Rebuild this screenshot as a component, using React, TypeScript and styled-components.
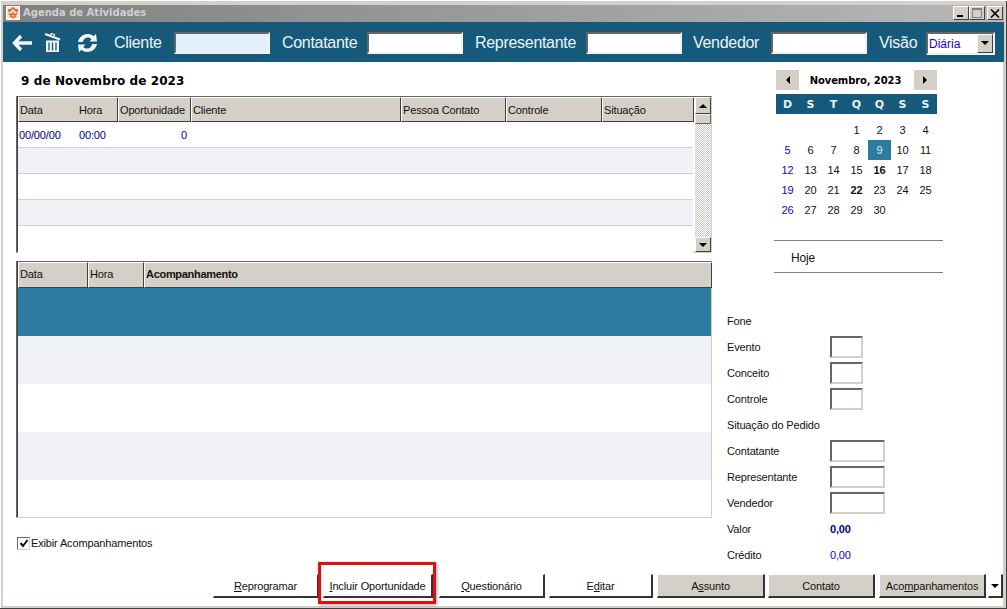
import React from "react";
import styled, { createGlobalStyle } from "styled-components";

const Global = createGlobalStyle`
  html, body { margin: 0; padding: 0; background: #d4d0c8; overflow: hidden; }
  * { box-sizing: border-box; }
`;
const FONT = `"Liberation Sans", Arial, sans-serif`;
const sunken = `border-style: solid; border-width: 2px; border-color: #666 #d4d0c8 #d4d0c8 #666;`;

const Win = styled.div`
  width: 1007px; height: 609px; background: #d4d0c8; border-top: 1px solid #fff;
  padding: 4px 3px 3px 3px; display: flex; flex-direction: column;
  font: 11px ${FONT}; letter-spacing: -0.15px; color: #111; box-shadow: inset -1px -1px 0 #404040, inset 1px 0 0 #fff;
`;
const Title = styled.div`
  height: 17px; flex: none; display: flex; align-items: center; padding: 0 1px 1px 3px;
  background: linear-gradient(90deg, #808080, #b8b8b8); color: #d0d0d0; letter-spacing: 0;
  font: bold 10px "DejaVu Sans", sans-serif;
`;
const TitleIcon = styled.svg` width: 14px; height: 14px; margin-right: 3px; flex: none; `;
const TitleText = styled.span` flex: 1; margin-bottom: 2px; `;
const WinBtn = styled.div`
  width: 16px; height: 14px; margin-left: ${(p: { $gap?: number }) => p.$gap ?? 0}px;
  background: #d4d0c8; display: flex; align-items: center; justify-content: center;
  border: 1px solid; border-color: #fff #404040 #404040 #fff;
`;
const Toolbar = styled.div`
  height: 40px; flex: none; background: #155a7a; display: flex; align-items: center;
  padding: 2px 0 0 9px; color: #eef4f7;
`;
const ToolIcon = styled.svg<{ $mr: number }>` flex: none; margin-right: ${p => p.$mr}px; `;
const ToolLabel = styled.span<{ $w: number }>`
  font: 16px ${FONT}; letter-spacing: -0.3px; width: ${p => p.$w}px; flex: none; white-space: nowrap;
`;
const ToolInput = styled.div<{ $fill?: string; $mr: number }>`
  width: 96px; height: 22px; flex: none; background: ${p => p.$fill ?? "#fff"}; margin-right: ${p => p.$mr}px;
  ${sunken} border-color: #666 #f0f0f0 #f0f0f0 #666;
`;
const VisaoSelect = styled.div`
  width: 69px; height: 23px; flex: none; background: #fff; display: flex; align-items: center;
  justify-content: space-between; padding-left: 1px; color: #1a00c8; font: 12px ${FONT}; letter-spacing: 0;
  ${sunken} border-color: #666 #f0f0f0 #f0f0f0 #666;
`;
const SelectText = styled.span` padding-top: 2px; `;
const SelectBtn = styled.div`
  width: 16px; height: 19px; background: #d4d0c8; display: flex; align-items: center; justify-content: center;
  border: 1px solid; border-color: #fff #404040 #404040 #fff;
`;
const Body = styled.div`
  flex: 1; background: #fff; display: flex; flex-direction: column; min-height: 0;
  border-right: 1px solid #d4d0c8;
`;
const Main = styled.div` flex: 1; display: flex; min-height: 0; `;
const Left = styled.div` width: 709px; flex: none; padding-left: 13px; `;
const DateTitle = styled.div`
  height: 34px; padding: 9px 0 0 5px; font: bold 12px "DejaVu Sans", sans-serif; letter-spacing: 0.1px; color: #000;
  line-height: 20px;
`;
const GridBox = styled.div`
  display: flex; border: 1px solid; border-color: #666 #d4d0c8 #d4d0c8 #666;
  box-shadow: inset 1px 0 0 #404040; height: ${(p: { $h: number }) => p.$h}px; width: 696px;
`;
const GridInner = styled.div` flex: 1; min-width: 0; display: flex; flex-direction: column; padding-left: 1px; `;
const HeaderRow = styled.div<{ $h: number }>` display: flex; height: ${p => p.$h}px; flex: none; `;
const HeaderCell = styled.div<{ $w: number; $bold?: boolean; $pb: number }>`
  width: ${p => p.$w}px; flex: none; background: #d4d0c8; display: flex; align-items: center; padding: 0 0 ${p => p.$pb}px 1px;
  border: 1px solid; border-color: #fff #404040 #404040 #fff; white-space: nowrap; color: #111;
  ${p => p.$bold && "font-weight: 700; letter-spacing: -0.3px;"}
`;
const HeaderSlot = styled.span` width: 59px; flex: none; `;
const Row = styled.div<{ $h: number; $bg: string; $line?: boolean }>`
  height: ${p => p.$h}px; flex: none; background: ${p => p.$bg}; display: flex; align-items: center;
  ${p => p.$line && "border-bottom: 1px solid #d4d0c8;"}
  color: #00008b;
`;
const RowCell = styled.span<{ $w: number; $right?: boolean }>`
  width: ${p => p.$w}px; flex: none; padding: 0 4px 0 1px; ${p => p.$right && "text-align: right;"}
`;
const Scroll = styled.div`
  width: 16px; flex: none; display: flex; flex-direction: column; margin-left: 2px;
  background: repeating-conic-gradient(#c8c8c8 0 25%, #fff 0 50%) 0 0 / 2px 2px;
`;
const ScrollBtn = styled.div<{ $h: number }>`
  height: ${p => p.$h}px; flex: none; background: #d4d0c8; display: flex; align-items: center; justify-content: center;
  border: 1px solid; border-color: #fff #404040 #404040 #fff;
`;
const ScrollThumb = styled(ScrollBtn)` border-color: #eee #666 #666 #eee; `;
const ScrollFill = styled.div` flex: 1; `;
const GridGap = styled.div` height: 8px; `;
const Check = styled.label` display: flex; align-items: center; margin-top: 18px; height: 14px; color: #111; `;
const CheckBox = styled.span`
  width: 13px; height: 13px; margin: 0 1px 0 1px; background: #fff; display: flex; align-items: center; justify-content: center;
  border: 1px solid; border-color: #666 #d4d0c8 #d4d0c8 #666; flex: none;
`;
const Right = styled.div` flex: 1; display: flex; flex-direction: column; padding-left: 15px; position: relative; `;
const Calendar = styled.div` margin: 8px 0 0 49px; width: 161px; `;
const CalNav = styled.div` display: flex; height: 20px; align-items: center; justify-content: space-between; `;
const CalNavBtn = styled.div`
  width: 23px; height: 20px; background: #d4d0c8; display: flex; align-items: center; justify-content: center;
`;
const CalMonth = styled.div` font: bold 10px "DejaVu Sans", sans-serif; letter-spacing: -0.1px; color: #000; margin-right: 2px; `;
const WeekHead = styled.div`
  display: grid; grid-template-columns: repeat(7, 23px); height: 20px; margin-top: 4px; background: #155a7a;
  color: #eaf2f6; font: bold 11px "DejaVu Sans", sans-serif; letter-spacing: 0; align-items: center; text-align: center;
`;
const Days = styled.div` display: grid; grid-template-columns: repeat(7, 23px); grid-auto-rows: 20px; margin-top: 6px; `;
const Day = styled.div<{ $sun?: boolean; $sel?: boolean; $bold?: boolean }>`
  display: flex; align-items: center; justify-content: center; font-size: 11px;
  color: ${p => p.$sel ? "#d8e8f0" : p.$sun ? "#1a00c8" : "#111"};
  background: ${p => p.$sel ? "#2e7ba2" : "transparent"};
  font-weight: ${p => p.$bold ? 700 : 400};
`;
const Today = styled.div`
  margin: 20px 0 0 47px; width: 169px; height: 33px; border-top: 1px solid #808080; border-bottom: 1px solid #808080;
  display: flex; align-items: center; padding: 2px 0 0 17px; font-size: 12px; color: #111;
`;
const Details = styled.div` margin-top: 35px; `;
const DetailRow = styled.div` height: 26px; display: flex; align-items: center; color: #111; `;
const DetailLabel = styled.span` width: 103px; flex: none; `;
const DetailInput = styled.div<{ $w: number }>`
  width: ${p => p.$w}px; height: 22px; background: #fff; ${sunken}
`;
const Value = styled.span<{ $bold?: boolean }>`
  color: ${p => p.$bold ? "#00008b" : "#1a00c8"}; font-weight: ${p => p.$bold ? 700 : 400};
`;
const Buttons = styled.div` height: 26px; flex: none; margin: 0 0 8px 0; padding-left: 210px; display: flex; align-items: flex-end; `;
const Btn = styled.div<{ $w: number; $flat?: boolean; $mr: number }>`
  width: ${p => p.$w}px; height: 24px; flex: none; margin-right: ${p => p.$mr}px; display: flex; align-items: center; justify-content: center;
  white-space: nowrap; color: #111;
  background: ${p => p.$flat ? "#fff" : "#d4d0c8"};
  border-style: solid; border-width: 1px 2px 2px 1px;
  border-color: #fff #333 #333 #fff;
`;
const ArrowBtn = styled(Btn)` background: #fff; `;
const U = styled.span` text-decoration: underline; `;
const Highlight = styled.div`
  position: absolute; left: 318px; top: 562px; width: 118px; height: 42px; border: 3px solid #e01010; pointer-events: none;
  box-shadow: 1px 1px 3px rgba(0,0,0,.35);
`;
const Page = styled.div` position: relative; `;

const Tri = ({ d, c = "#000" }: { d: "up" | "down" | "left" | "right"; c?: string }) => {
  const pts = { up: "0,5 4,1 8,5", down: "0,1 8,1 4,5", left: "5,0 1,4 5,8", right: "1,0 5,4 1,8" }[d];
  const horiz = d === "left" || d === "right";
  return <svg width={horiz ? 6 : 9} height={horiz ? 9 : 6} viewBox={horiz ? "0 0 6 9" : "0 0 9 6"}><polygon points={pts} fill={c} /></svg>;
};

const weeks: (number | null)[] = [null, null, null, 1, 2, 3, 4, 5, 6, 7, 8, 9, 10, 11, 12, 13, 14, 15, 16, 17, 18, 19, 20, 21, 22, 23, 24, 25, 26, 27, 28, 29, 30];
const cols1: [string, number][] = [["Oportunidade", 73], ["Cliente", 210], ["Pessoa Contato", 105], ["Controle", 96], ["Situação", 92]];
const REFRESH_TOP = "M0 8C1 3 5 0 10 0c2.500 0 4.500 1 5.500 2.200L18 0l1 7.500h-7.500l2.200-2.400C12.500 3.900 11 3.400 10 3.400 7.500 3.400 5.500 5 4.800 8Z";

export default function App() {
  return (
    <Page>
      <Global />
      <Win>
        <Title>
          <TitleIcon viewBox="0 0 14 14">
            <rect width="14" height="14" fill="#fff" />
            <rect x="1" y="1" width="12" height="12" fill="#f8e8dc" />
            <path d="M3 5.500L7 2l4 3.500M3 7l4 5M11 7l-4 5M4 11l3-4 3 4M3 3v3M11 3v3" stroke="#ec6a2c" strokeWidth="1.7" fill="none" />
          </TitleIcon>
          <TitleText>Agenda de Atividades</TitleText>
          <WinBtn $gap={0}><svg width="10" height="10"><rect x="1" y="7" width="6" height="2" fill="#000" /></svg></WinBtn>
          <WinBtn $gap={0}><svg width="10" height="10"><rect x="0.5" y="0.5" width="9" height="9" fill="none" stroke="#808080" /><rect x="0" y="0" width="10" height="2" fill="#808080" /></svg></WinBtn>
          <WinBtn $gap={2}><svg width="10" height="9"><path d="M1 0.500l8 8M9 0.500l-8 8" stroke="#000" strokeWidth="1.6" /></svg></WinBtn>
        </Title>
        <Toolbar>
          <ToolIcon $mr={12} width="20" height="18" viewBox="0 0 20 18"><path d="M9 2L2.500 9 9 16M3 9h17" stroke="#f2f6f8" strokeWidth="3.400" fill="none" /></ToolIcon>
          <ToolIcon $mr={17} width="17" height="20" viewBox="0 0 17 20">
            <path d="M1 1l15 5.500" stroke="#f2f6f8" strokeWidth="2" fill="none" />
            <path d="M6 2l1.500-1.500 3 1.200v1.600" stroke="#f2f6f8" strokeWidth="1.200" fill="none" />
            <path d="M2 7.500h13V19H2z" fill="#f2f6f8" />
            <path d="M5 9.500v8M8.500 9.500v8M12 9.500v8" stroke="#155a7a" strokeWidth="1.300" />
          </ToolIcon>
          <ToolIcon $mr={16} width="20" height="18" viewBox="0 0 20 18">
            <path d={REFRESH_TOP} fill="#f2f6f8" />
            <path d={REFRESH_TOP} fill="#f2f6f8" transform="rotate(180 9.500 9)" />
          </ToolIcon>
          <ToolLabel $w={60}>Cliente</ToolLabel>
          <ToolInput $fill="#e4f0fc" $mr={12} />
          <ToolLabel $w={85}>Contatante</ToolLabel>
          <ToolInput $mr={12} />
          <ToolLabel $w={111}>Representante</ToolLabel>
          <ToolInput $mr={11} />
          <ToolLabel $w={78}>Vendedor</ToolLabel>
          <ToolInput $mr={12} />
          <ToolLabel $w={47}>Visão</ToolLabel>
          <VisaoSelect><SelectText>Diária</SelectText><SelectBtn><Tri d="down" /></SelectBtn></VisaoSelect>
        </Toolbar>
        <Body>
          <Main>
            <Left>
              <DateTitle>9 de Novembro de 2023</DateTitle>
              <GridBox $h={157}>
                <GridInner>
                  <HeaderRow $h={25}>
                    <HeaderCell $pb={0} $w={100}><HeaderSlot>Data</HeaderSlot>Hora</HeaderCell>
                    {cols1.map(([t, w]) => <HeaderCell $pb={0} key={t} $w={w}>{t}</HeaderCell>)}
                  </HeaderRow>
                  <Row $h={26} $bg="#fff" $line><RowCell $w={60}>00/00/00</RowCell><RowCell $w={40}>00:00</RowCell><RowCell $w={73} $right>0</RowCell></Row>
                  <Row $h={26} $bg="#f0f2f8" $line />
                  <Row $h={26} $bg="#fff" $line />
                  <Row $h={26} $bg="#f0f2f8" $line />
                  <Row $h={27} $bg="#fff" />
                </GridInner>
                <Scroll>
                  <ScrollBtn $h={17}><Tri d="up" /></ScrollBtn>
                  <ScrollThumb $h={10} />
                  <ScrollFill />
                  <ScrollBtn $h={15}><Tri d="down" /></ScrollBtn>
                </Scroll>
              </GridBox>
              <GridGap />
              <GridBox $h={257}>
                <GridInner>
                  <HeaderRow $h={26}>
                    <HeaderCell $pb={2} $w={70}>Data</HeaderCell>
                    <HeaderCell $pb={2} $w={56}>Hora</HeaderCell>
                    <HeaderCell $pb={2} $w={568} $bold>Acompanhamento</HeaderCell>
                  </HeaderRow>
                  <Row $h={48} $bg="#2e7ba2" />
                  <Row $h={48} $bg="#f0f2f8" />
                  <Row $h={48} $bg="#fff" />
                  <Row $h={48} $bg="#f0f2f8" />
                  <Row $h={36} $bg="#fff" />
                </GridInner>
              </GridBox>
              <Check>
                <CheckBox><svg width="10" height="10"><path d="M1.500 5l2.500 3 4.500-6" stroke="#111" strokeWidth="2" fill="none" /></svg></CheckBox>
                Exibir Acompanhamentos
              </Check>
            </Left>
            <Right>
              <Calendar>
                <CalNav>
                  <CalNavBtn><Tri d="left" /></CalNavBtn>
                  <CalMonth>Novembro, 2023</CalMonth>
                  <CalNavBtn><Tri d="right" /></CalNavBtn>
                </CalNav>
                <WeekHead>{["D", "S", "T", "Q", "Q", "S", "S"].map((d, i) => <span key={i}>{d}</span>)}</WeekHead>
                <Days>
                  {weeks.map((d, i) => (
                    <Day key={i} $sun={i % 7 === 0} $sel={d === 9} $bold={d === 16 || d === 22}>{d}</Day>
                  ))}
                </Days>
              </Calendar>
              <Today>Hoje</Today>
              <Details>
                <DetailRow><DetailLabel>Fone</DetailLabel></DetailRow>
                <DetailRow><DetailLabel>Evento</DetailLabel><DetailInput $w={33} /></DetailRow>
                <DetailRow><DetailLabel>Conceito</DetailLabel><DetailInput $w={33} /></DetailRow>
                <DetailRow><DetailLabel>Controle</DetailLabel><DetailInput $w={33} /></DetailRow>
                <DetailRow><DetailLabel>Situação do Pedido</DetailLabel></DetailRow>
                <DetailRow><DetailLabel>Contatante</DetailLabel><DetailInput $w={55} /></DetailRow>
                <DetailRow><DetailLabel>Representante</DetailLabel><DetailInput $w={55} /></DetailRow>
                <DetailRow><DetailLabel>Vendedor</DetailLabel><DetailInput $w={55} /></DetailRow>
                <DetailRow><DetailLabel>Valor</DetailLabel><Value $bold>0,00</Value></DetailRow>
                <DetailRow><DetailLabel>Crédito</DetailLabel><Value>0,00</Value></DetailRow>
              </Details>
            </Right>
          </Main>
          <Buttons>
            <Btn $flat $w={106} $mr={4}><U>R</U>eprogramar</Btn>
            <Btn $flat $w={110} $mr={6}><U>I</U>ncluir Oportunidade</Btn>
            <Btn $flat $w={106} $mr={4}><U>Q</U>uestionário</Btn>
            <Btn $flat $w={104} $mr={4}>E<U>d</U>itar</Btn>
            <Btn $w={108} $mr={3}>A<U>s</U>sunto</Btn>
            <Btn $w={107} $mr={4}>Contato</Btn>
            <Btn $w={107} $mr={2}>Aco<U>m</U>panhamentos</Btn>
            <ArrowBtn $w={15} $mr={0}><Tri d="down" /></ArrowBtn>
          </Buttons>
        </Body>
      </Win>
      <Highlight />
    </Page>
  );
}
